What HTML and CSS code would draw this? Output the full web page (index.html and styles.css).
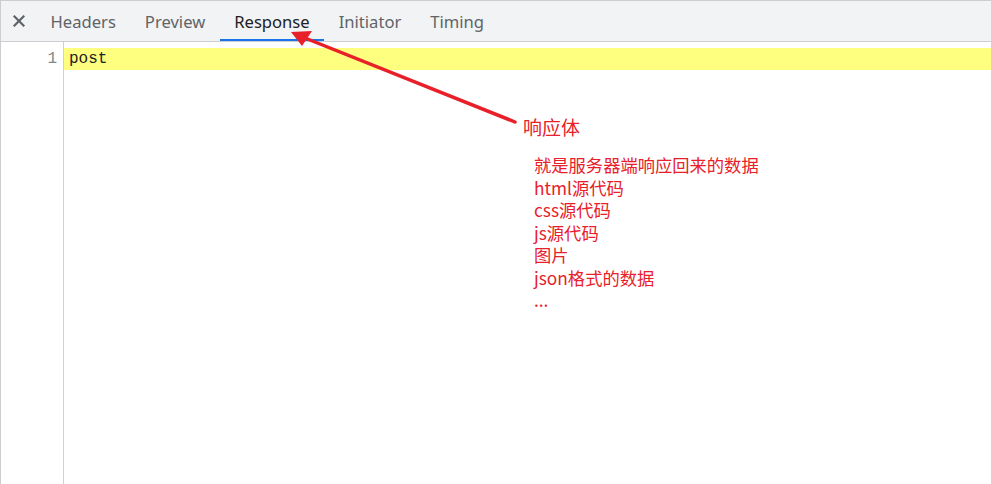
FILE: index.html
```html
<!DOCTYPE html>
<html lang="zh">
<head>
<meta charset="utf-8">
<title>Response</title>
<link rel="stylesheet" href="styles.css">
</head>
<body>
<div class="panel">
  <div class="tabbar">
    <span class="close" aria-label="close">
      <svg width="12" height="12" viewBox="0 0 12 12"><path d="M1.5 1.5 L10.5 10.5 M10.5 1.5 L1.5 10.5" stroke="#5f6368" stroke-width="2.2" stroke-linecap="square"/></svg>
    </span>
    <span class="tab">Headers</span>
    <span class="tab">Preview</span>
    <span class="tab active">Response</span>
    <span class="tab">Initiator</span>
    <span class="tab">Timing</span>
  </div>
  <div class="editor">
    <div class="gutter"><div class="ln">1</div></div>
    <div class="code"><div class="line hl">post</div></div>
  </div>
  <svg class="arrow" width="991" height="484" viewBox="0 0 991 484">
    <line x1="515" y1="122" x2="305" y2="38" stroke="#e8202a" stroke-width="3.5" stroke-linecap="round"/>
    <polygon points="291,32 312,31 302,46" fill="#e8202a"/>
  </svg>
  <div class="note-title">响应体</div>
  <div class="note-list">
    <div class="note-line">就是服务器端响应回来的数据</div>
    <div class="note-line">html源代码</div>
    <div class="note-line">css源代码</div>
    <div class="note-line">js源代码</div>
    <div class="note-line">图片</div>
    <div class="note-line">json格式的数据</div>
    <div class="note-line">...</div>
  </div>
</div>
</body>
</html>
```
FILE: styles.css
```css
html, body {
  margin: 0;
  padding: 0;
  background: #ffffff;
}
.panel {
  position: relative;
  width: 990px;
  height: 483px;
  border-top: 1px solid #cbcdd1;
  border-left: 1px solid #cbcdd1;
  display: flex;
  flex-direction: column;
  overflow: hidden;
}
.tabbar {
  height: 40px;
  background: #f1f3f4;
  border-bottom: 1px solid #cbcdd1;
  display: flex;
  align-items: stretch;
  font-family: "Segoe UI", "Noto Sans", sans-serif;
  font-size: 16.6px;
  color: #5f6368;
  padding-left: 5px;
}
.close {
  width: 26px;
  display: flex;
  align-items: center;
  justify-content: center;
  margin-right: 4px;
}
.tab {
  display: flex;
  align-items: center;
  padding: 2px 14.5px 0 14.5px;
  box-sizing: border-box;
  border-bottom: 2px solid transparent;
}
.tab.active {
  color: #202124;
  border-bottom-color: #1a73e8;
}
.editor {
  flex: 1;
  display: flex;
}
.gutter {
  width: 62px;
  border-right: 1px solid #d0d0d0;
  padding-top: 6px;
  font-family: "Liberation Mono", monospace;
  font-size: 16px;
  color: #80868b;
}
.ln {
  height: 22px;
  line-height: 22px;
  text-align: right;
  padding-right: 6px;
}
.code {
  flex: 1;
  padding-top: 6px;
  font-family: "Liberation Mono", monospace;
  font-size: 16px;
  color: #202124;
}
.line {
  height: 22px;
  line-height: 22px;
  padding-left: 5px;
}
.hl {
  background: #ffff7f;
}
.arrow {
  position: absolute;
  left: -1px;
  top: -1px;
}
.note-title {
  position: absolute;
  left: 522px;
  top: 112px;
  font-family: "Microsoft YaHei", "Noto Sans CJK SC", sans-serif;
  font-size: 19px;
  color: #e8202a;
}
.note-list {
  position: absolute;
  left: 533px;
  top: 153px;
  font-family: "Microsoft YaHei", "Noto Sans CJK SC", sans-serif;
  font-size: 17.3px;
  color: #e8202a;
}
.note-line {
  height: 22.5px;
  line-height: 22.5px;
  white-space: nowrap;
}
```
